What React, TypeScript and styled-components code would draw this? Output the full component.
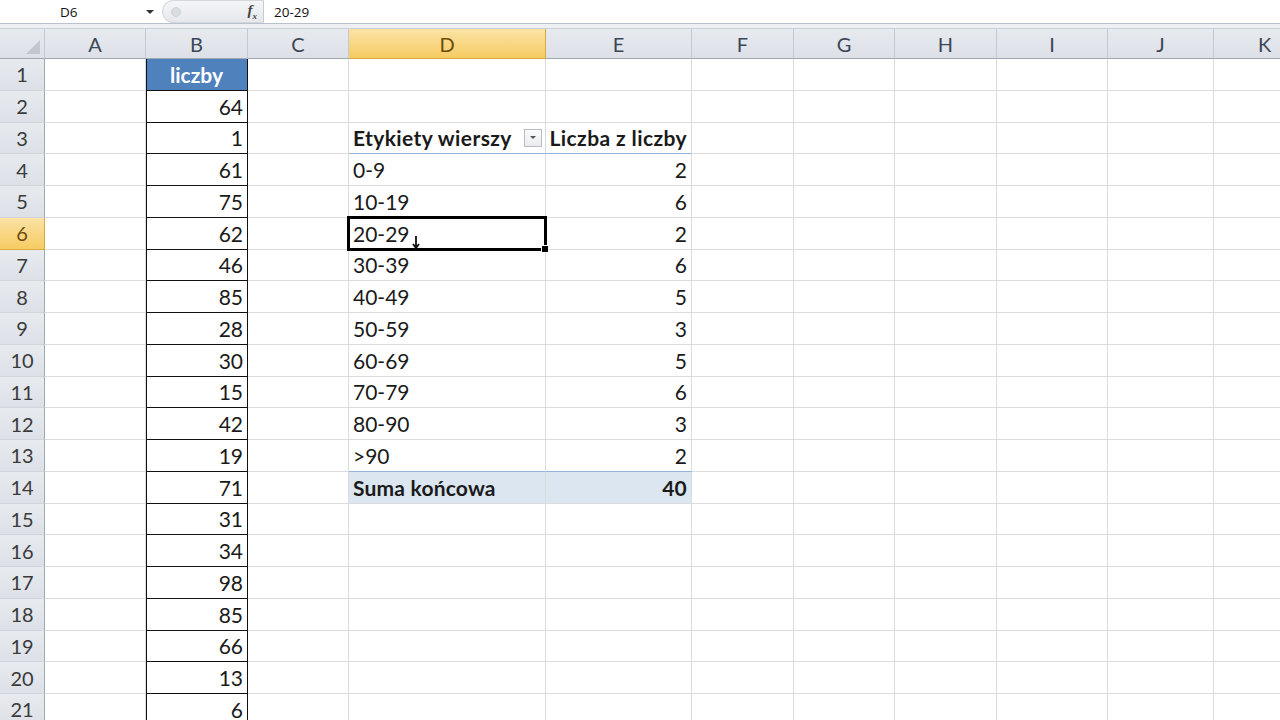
import React from "react";
import styled, { createGlobalStyle, css } from "styled-components";

const Global = createGlobalStyle`
  html, body { margin: 0; padding: 0; background: #fff; }
  body { width: 1280px; height: 720px; overflow: hidden; font-family: Lato, "Open Sans", sans-serif; }
`;

const Page = styled.div`
  width: 1280px;
  height: 720px;
  overflow: hidden;
  display: flex;
  flex-direction: column;
  background: #fff;
  & > * { flex-shrink: 0; }
`;

const FormulaBar = styled.div`
  height: 23px;
  display: flex;
  align-items: center;
  background: #fff;
  border-bottom: 1px solid #b9c1cc;
  font-family: "Open Sans", sans-serif;
  font-size: 13.5px;
  color: #111;
`;

const NameBox = styled.div`
  width: 156px;
  padding-left: 60px;
  box-sizing: border-box;
  display: flex;
  align-items: center;
  justify-content: space-between;
  padding-right: 2px;
`;

const Caret = styled.span`
  width: 0;
  height: 0;
  border-left: 4px solid transparent;
  border-right: 4px solid transparent;
  border-top: 4px solid #333;
`;

const Pill = styled.div`
  margin-left: 6px;
  width: 102px;
  height: 23px;
  background: linear-gradient(#f4f5f7, #e6e8ec);
  border-radius: 12px 0 0 12px;
  border: 1px solid #d4d8de;
  border-right: 1px solid #c6ccd4;
  box-sizing: border-box;
  display: flex;
  align-items: center;
  justify-content: space-between;
  padding: 0 6px 0 8px;
`;

const Grip = styled.span`
  width: 8px;
  height: 8px;
  border-radius: 50%;
  background: #d8dbe0;
  border: 1px solid #cfd3d9;
`;

const Fx = styled.span`
  font-family: "Liberation Serif", serif;
  font-style: italic;
  font-weight: bold;
  font-size: 15px;
  color: #444;
`;

const FxSub = styled.sub`
  font-size: 9px;
`;

const FormulaText = styled.div`
  padding-left: 10px;
`;

const Spacer = styled.div`
  height: 4px;
  background: #eef0f3;
  border-bottom: 1px solid #c9cfd7;
`;

const COLS = [45, 101, 102, 101, 197, 146, 102, 101, 102, 111, 106, 102];
const LETTERS = ["A", "B", "C", "D", "E", "F", "G", "H", "I", "J", "K"];

const Grid = styled.div`
  display: grid;
  grid-template-columns: ${COLS.map((c) => c + "px").join(" ")};
  grid-template-rows: 30px repeat(21, 31.75px);
`;

const headerBase = css<{ $sel?: boolean }>`
  box-sizing: border-box;
  display: flex;
  align-items: center;
  justify-content: center;
  font-family: Lato, "Open Sans", sans-serif;
  font-size: 20px;
  color: #3b4656;
  background: ${(p) =>
    p.$sel ? "linear-gradient(#fbe3a6, #f6cb62)" : "linear-gradient(#e7eaef, #dde1e7)"};
  ${(p) => p.$sel && "color: #6b4c08;"}
`;

const Corner = styled.div`
  ${headerBase};
  border-right: 1px solid #c4c9d1;
  border-bottom: 1px solid #9fa9b6;
  position: relative;
  &::after {
    content: "";
    position: absolute;
    right: 4px;
    bottom: 4px;
    border-left: 14px solid transparent;
    border-bottom: 14px solid #c3c7cd;
  }
`;

const ColHead = styled.div<{ $sel?: boolean }>`
  ${headerBase};
  border-right: 1px solid ${(p) => (p.$sel ? "#d9a93e" : "#c4c9d1")};
  border-bottom: 1px solid ${(p) => (p.$sel ? "#d9a93e" : "#9fa9b6")};
`;

const RowHead = styled.div<{ $sel?: boolean }>`
  ${headerBase};
  font-size: 20px;
  color: ${(p) => (p.$sel ? "#6b4c08" : "#3a3a3a")};
  border-right: 1px solid ${(p) => (p.$sel ? "#d9a93e" : "#9fa9b6")};
  border-bottom: 1px solid ${(p) => (p.$sel ? "#d9a93e" : "#d0d5dc")};
`;

type CellKind = "plain" | "data" | "dataHead" | "pivHead" | "pivTotal";

const Cell = styled.div<{
  $kind: CellKind;
  $align?: "left" | "right" | "center";
}>`
  box-sizing: border-box;
  position: relative;
  display: flex;
  align-items: center;
  justify-content: ${(p) =>
    p.$align === "right" ? "flex-end" : p.$align === "center" ? "center" : "space-between"};
  padding: 0 4px 0 4px;
  font-family: Lato, "Open Sans", sans-serif;
  font-size: 21px;
  color: #1a1a1a;
  white-space: nowrap;
  border-right: 1px solid #dadcdf;
  border-bottom: 1px solid #dadcdf;
  ${(p) =>
    (p.$kind === "data" || p.$kind === "dataHead") &&
    css`
      border-right: 1px solid #111;
      border-bottom: 1px solid #111;
      box-shadow: inset 1px 0 0 #111;
    `}
  ${(p) =>
    p.$kind === "dataHead" &&
    css`
      background: #4f81bd;
      color: #fff;
      font-weight: bold;
    `}
  ${(p) =>
    p.$kind === "pivHead" &&
    css`
      font-weight: bold;
      letter-spacing: 0.4px;
      border-bottom: 1px solid #95b3d7;
    `}
  ${(p) =>
    p.$kind === "pivTotal" &&
    css`
      font-weight: bold;
      letter-spacing: 0.2px;
      background: #dce6f1;
      border-top: 1px solid #95b3d7;
      border-bottom: 1px solid #dadcdf;
      margin-top: -1px;
    `}
`;

const FilterBtn = styled.span`
  width: 18px;
  height: 18px;
  box-sizing: border-box;
  border: 1px solid #b7bcc3;
  background: linear-gradient(#fbfbfc, #e9ebee);
  display: flex;
  align-items: center;
  justify-content: center;
  margin-right: -1px;
  &::after {
    content: "";
    border-left: 3.5px solid transparent;
    border-right: 3.5px solid transparent;
    border-top: 3.5px solid #555;
  }
`;

const Selection = styled.div`
  position: absolute;
  left: -2px;
  top: -2px;
  right: -2px;
  bottom: -2px;
  border: 3px solid #000;
  pointer-events: none;
  z-index: 2;
  &::after {
    content: "";
    position: absolute;
    right: -5px;
    bottom: -5px;
    width: 6px;
    height: 6px;
    background: #000;
    border: 1px solid #fff;
  }
`;

const Cursor = styled.svg`
  position: absolute;
  left: 63px;
  top: 18px;
  z-index: 3;
`;

const bValues = [64, 1, 61, 75, 62, 46, 85, 28, 30, 15, 42, 19, 71, 31, 34, 98, 85, 66, 13, 6];
const pivot: [string, number][] = [
  ["0-9", 2],
  ["10-19", 6],
  ["20-29", 2],
  ["30-39", 6],
  ["40-49", 5],
  ["50-59", 3],
  ["60-69", 5],
  ["70-79", 6],
  ["80-90", 3],
  [">90", 2],
];

function renderCell(row: number, col: number) {
  const key = `${row}-${col}`;
  const letter = LETTERS[col];
  if (letter === "B") {
    if (row === 1)
      return (
        <Cell key={key} $kind="dataHead" $align="center">
          liczby
        </Cell>
      );
    return (
      <Cell key={key} $kind="data" $align="right">
        {bValues[row - 2]}
      </Cell>
    );
  }
  if (letter === "D" || letter === "E") {
    const isD = letter === "D";
    if (row === 3)
      return isD ? (
        <Cell key={key} $kind="pivHead">
          <span>Etykiety wierszy</span>
          <FilterBtn />
        </Cell>
      ) : (
        <Cell key={key} $kind="pivHead" $align="right">
          Liczba z liczby
        </Cell>
      );
    if (row >= 4 && row <= 13) {
      const [label, val] = pivot[row - 4];
      return isD ? (
        <Cell key={key} $kind="plain">
          <span>{label}</span>
          {row === 6 && (
            <>
              <Selection />
              <Cursor width="8" height="14" viewBox="0 0 8 14">
                <path d="M4 0 V11 M1 8 L4 12 L7 8" stroke="#111" strokeWidth="1.8" fill="none" />
              </Cursor>
            </>
          )}
        </Cell>
      ) : (
        <Cell key={key} $kind="plain" $align="right">
          {val}
        </Cell>
      );
    }
    if (row === 14)
      return isD ? (
        <Cell key={key} $kind="pivTotal">
          <span>Suma końcowa</span>
        </Cell>
      ) : (
        <Cell key={key} $kind="pivTotal" $align="right">
          40
        </Cell>
      );
  }
  return <Cell key={key} $kind="plain" />;
}

export default function App() {
  const rows = Array.from({ length: 21 }, (_, i) => i + 1);
  return (
    <Page>
      <Global />
      <FormulaBar>
        <NameBox>
          <span>D6</span>
          <Caret />
        </NameBox>
        <Pill>
          <Grip />
          <Fx>
            f<FxSub>x</FxSub>
          </Fx>
        </Pill>
        <FormulaText>20-29</FormulaText>
      </FormulaBar>
      <Spacer />
      <Grid>
        <Corner />
        {LETTERS.map((l) => (
          <ColHead key={l} $sel={l === "D"}>
            {l}
          </ColHead>
        ))}
        {rows.map((r) => (
          <React.Fragment key={r}>
            <RowHead $sel={r === 6}>{r}</RowHead>
            {LETTERS.map((_, c) => renderCell(r, c))}
          </React.Fragment>
        ))}
      </Grid>
    </Page>
  );
}
